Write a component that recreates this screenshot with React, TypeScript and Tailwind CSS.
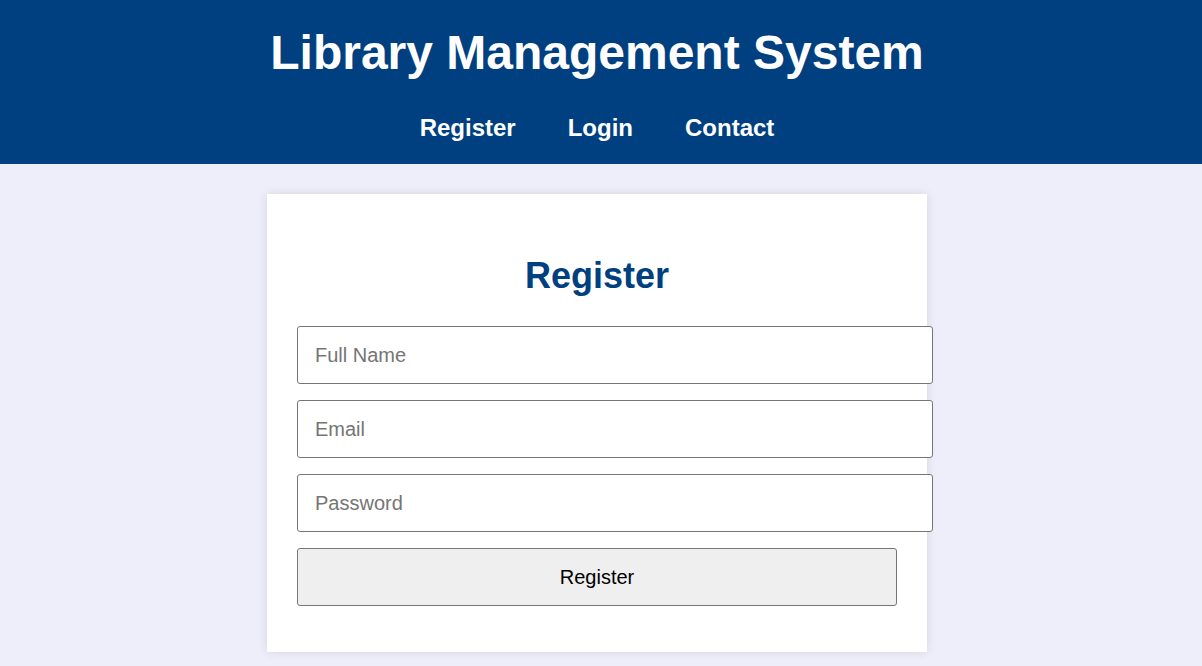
import React from 'react';

const navLinks = ['Register', 'Login', 'Contact'];

const fields = [
  { name: 'fullname', type: 'text', placeholder: 'Full Name' },
  { name: 'email', type: 'email', placeholder: 'Email' },
  { name: 'password', type: 'password', placeholder: 'Password' },
];

const App: React.FC = () => {
  return (
    <div className="min-h-screen bg-[#eeeefb] font-['Liberation_Sans',Arial,sans-serif]">
      <header className="h-[164px] bg-[#004080] pt-[25px] text-white">
        <div className="mr-[8px] flex flex-col items-center">
          <h1 className="text-[48px] font-bold leading-[55px]">Library Management System</h1>
          <nav className="mt-[34px] flex gap-[52px]">
            {navLinks.map((link) => (
              <a key={link} href="#" className="text-[24px] font-bold leading-[28px] text-white">
                {link}
              </a>
            ))}
          </nav>
        </div>
      </header>

      <main className="mr-[8px] flex justify-center pt-[30px]">
        <div className="w-[660px] bg-white px-[30px] pt-[31px] pb-[46px] shadow-[0_0_10px_rgba(0,0,0,0.1)]">
          <h2 className="my-[30px] text-center text-[36px] font-bold leading-[41px] text-[#004080]">
            Register
          </h2>
          <form className="flex flex-col gap-[16px]" onSubmit={(e) => e.preventDefault()}>
            {fields.map((f) => (
              <input
                key={f.name}
                name={f.name}
                type={f.type}
                placeholder={f.placeholder}
                className="h-[58px] w-[636px] rounded-[3px] border border-[#767676] bg-white px-[17px] text-[20px] text-black placeholder:text-[#757575]"
              />
            ))}
            <button
              type="submit"
              className="h-[58px] w-[600px] rounded-[3px] border border-[#767676] bg-[#efefef] text-[20px] text-black"
            >
              Register
            </button>
          </form>
        </div>
      </main>
    </div>
  );
};

export default App;
